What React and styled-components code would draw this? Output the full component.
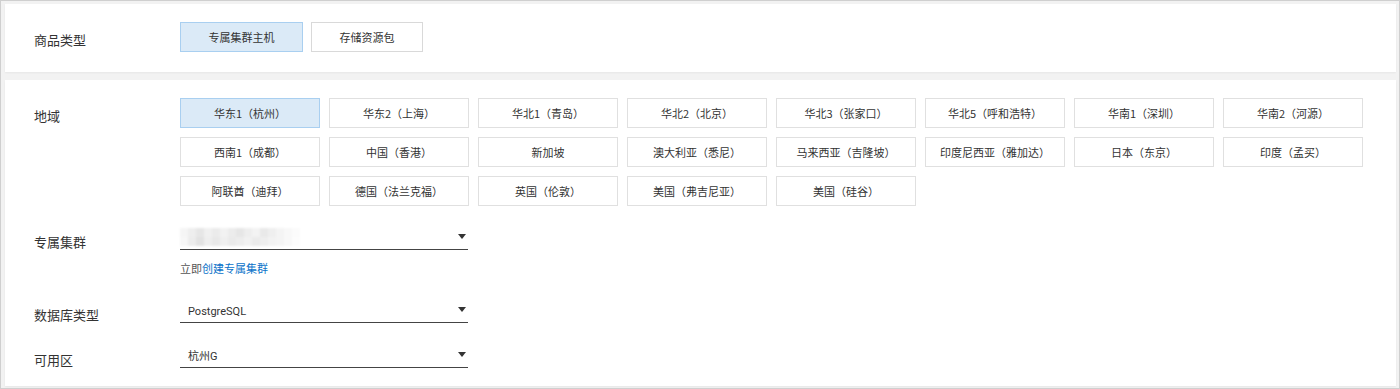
import React from "react";
import styled, { createGlobalStyle } from "styled-components";

const Global = createGlobalStyle`
  html, body { margin: 0; padding: 0; background: #fff; }
  body { font-family: "Noto Sans CJK SC", "Noto Sans", sans-serif; }
  * { box-sizing: border-box; }
`;

const Frame = styled.div`
  width: 1400px;
  height: 389px;
  border: 1px solid #cfcfcf;
  background: #f2f2f2;
  padding: 3px 3px 2px 4px;
  display: flex;
  flex-direction: column;
  gap: 8px;
`;

const Panel = styled.section`
  background: #fff;
  box-shadow: 0 1px 2px rgba(0, 0, 0, 0.05);
  padding: ${(p) => p.$pad};
  display: flex;
  flex-direction: column;
`;

const Row = styled.div`
  display: flex;
  align-items: ${(p) => (p.$bottom ? "flex-end" : "flex-start")};
  margin-top: ${(p) => p.$mt || 0}px;
`;

const Label = styled.div`
  width: 146px;
  flex-shrink: 0;
  font-size: 13px;
  line-height: 16px;
  color: #333;
  padding-top: ${(p) => (p.$bottom ? 0 : 10)}px;
`;

const ButtonGroup = styled.div`
  display: flex;
  gap: 8px;
`;

const Choice = styled.button`
  height: 30px;
  padding: 0;
  width: ${(p) => p.$w}px;
  font-family: inherit;
  font-size: 11px;
  color: #333;
  background: ${(p) => (p.$active ? "#dbeaf7" : "#fff")};
  border: 1px solid ${(p) => (p.$active ? "#a9cff0" : "#d9d9d9")};
  cursor: pointer;
`;

const RegionGrid = styled.div`
  display: grid;
  grid-template-columns: repeat(8, 140px);
  gap: 9px;
`;

const Region = styled.button`
  height: 30px;
  padding: 0;
  font-family: inherit;
  font-size: 11px;
  color: #333;
  background: ${(p) => (p.$active ? "#dbeaf7" : "#fff")};
  border: 1px solid ${(p) => (p.$active ? "#a9cff0" : "#e0e0e0")};
  cursor: pointer;
`;

const Select = styled.div`
  width: 288px;
  height: 25px;
  border-bottom: 1px solid #444;
  display: flex;
  justify-content: space-between;
  align-items: flex-end;
  padding: 0 1px 2px 8px;
`;

const Value = styled.span`
  font-family: Roboto, "Noto Sans CJK SC", sans-serif;
  font-size: 11px;
  line-height: 16px;
  color: #333;
`;

const Arrow = styled.span`
  width: 0;
  height: 0;
  border-left: 4px solid transparent;
  border-right: 4px solid transparent;
  border-top: 5px solid #333;
  margin-bottom: 8px;
  margin-right: 1px;
`;

const Mosaic = styled.div`
  display: grid;
  grid-template-columns: repeat(15, 8px);
  grid-template-rows: repeat(2, 9px);
  margin-left: -8px;
  margin-bottom: 1px;
  filter: blur(0.8px);
`;

const Tile = styled.span`
  background: ${(p) => p.$c};
`;

const Hint = styled.div`
  margin-left: 146px;
  margin-top: 10px;
  font-size: 11px;
  line-height: 16px;
  color: #555;
`;

const Link = styled.a`
  color: #0a72c9;
  text-decoration: none;
`;

const regions = [
  "华东1（杭州）", "华东2（上海）", "华北1（青岛）", "华北2（北京）",
  "华北3（张家口）", "华北5（呼和浩特）", "华南1（深圳）", "华南2（河源）",
  "西南1（成都）", "中国（香港）", "新加坡", "澳大利亚（悉尼）",
  "马来西亚（吉隆坡）", "印度尼西亚（雅加达）", "日本（东京）", "印度（孟买）",
  "阿联酋（迪拜）", "德国（法兰克福）", "英国（伦敦）", "美国（弗吉尼亚）",
  "美国（硅谷）",
];

const mosaicColors = [
  "#f5f5f5", "#eeeeee", "#e6e6e6", "#f0f0f0", "#ebebeb", "#f2f2f2", "#ececec", "#e6e6e6",
  "#eeeeee", "#f3f3f3", "#e9e9e9", "#efefef", "#f4f4f4", "#f8f8f8", "#fbfbfb",
  "#f7f7f7", "#ececec", "#e2e2e2", "#eeeeee", "#e8e8e8", "#efefef", "#eaeaea", "#ededed",
  "#f1f1f1", "#ebebeb", "#eeeeee", "#f2f2f2", "#f4f4f4", "#f8f8f8", "#fcfcfc",
];

export default function App() {
  return (
    <>
      <Global />
      <Frame>
        <Panel $pad="18px 0 20px 29px">
          <Row>
            <Label>商品类型</Label>
            <ButtonGroup>
              <Choice $active $w={123}>专属集群主机</Choice>
              <Choice $w={112}>存储资源包</Choice>
            </ButtonGroup>
          </Row>
        </Panel>
        <Panel $pad="18px 0 0 29px" style={{ flex: 1 }}>
          <Row>
            <Label>地域</Label>
            <RegionGrid>
              {regions.map((r, i) => (
                <Region key={r} $active={i === 0}>{r}</Region>
              ))}
            </RegionGrid>
          </Row>
          <Row $bottom $mt={19}>
            <Label $bottom>专属集群</Label>
            <Select>
              <Mosaic>
                {mosaicColors.map((c, i) => (
                  <Tile key={i} $c={c} />
                ))}
              </Mosaic>
              <Arrow />
            </Select>
          </Row>
          <Hint>
            立即<Link href="#">创建专属集群</Link>
          </Hint>
          <Row $bottom $mt={22}>
            <Label $bottom>数据库类型</Label>
            <Select>
              <Value>PostgreSQL</Value>
              <Arrow />
            </Select>
          </Row>
          <Row $bottom $mt={20}>
            <Label $bottom>可用区</Label>
            <Select>
              <Value>杭州G</Value>
              <Arrow />
            </Select>
          </Row>
        </Panel>
      </Frame>
    </>
  );
}
